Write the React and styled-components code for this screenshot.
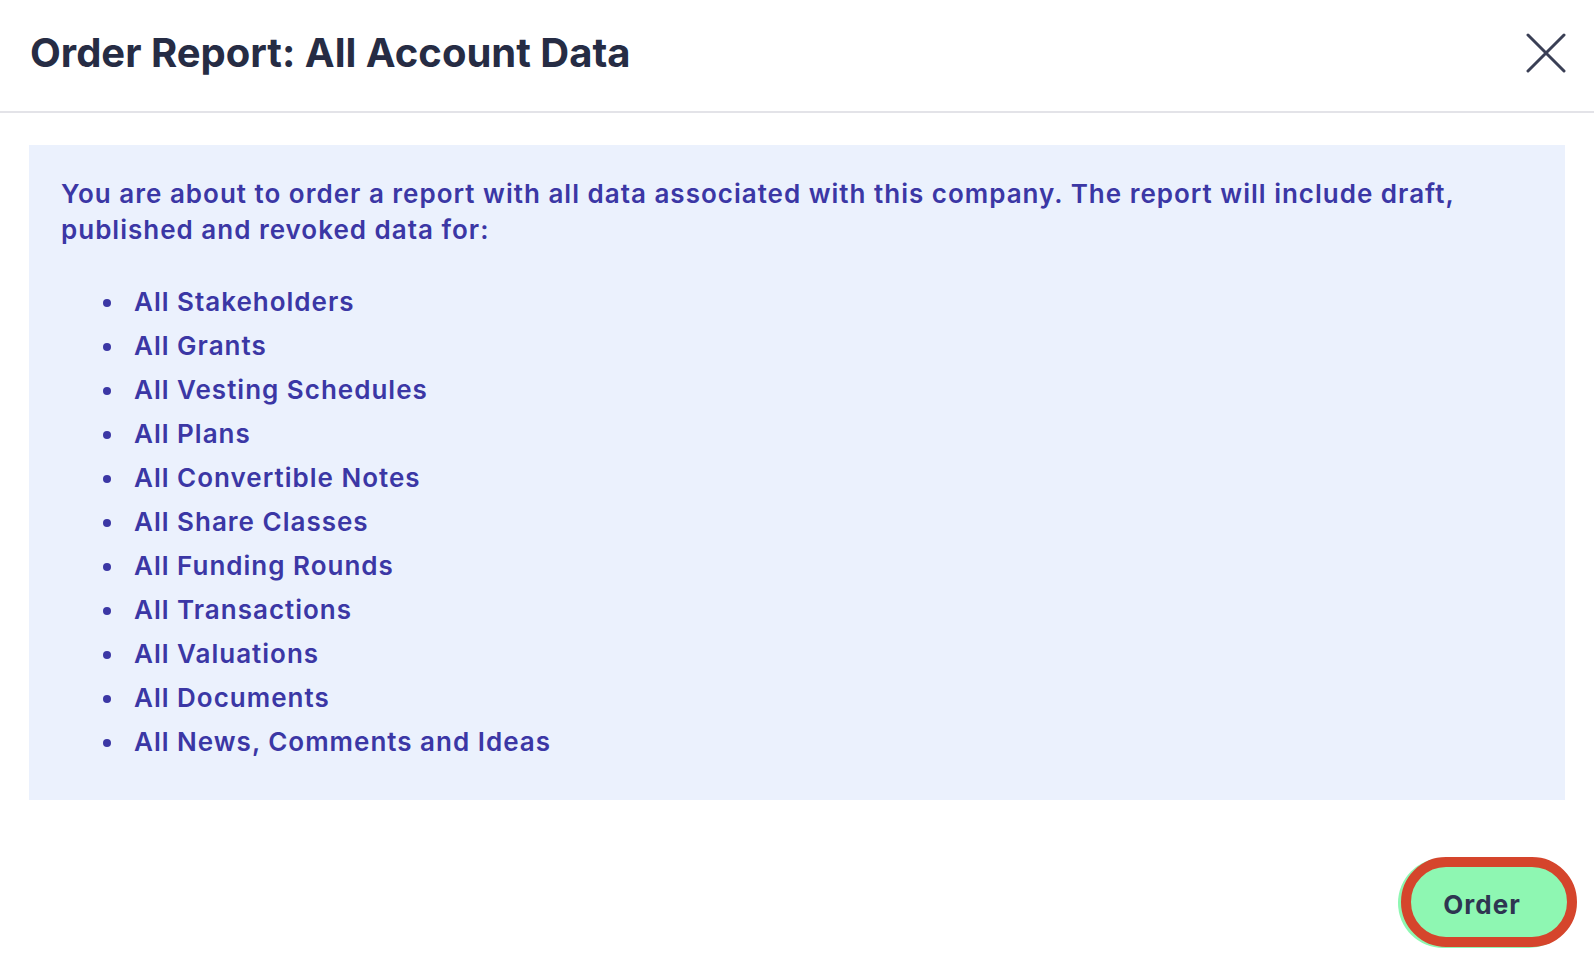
import styled, { createGlobalStyle } from "styled-components";

const GlobalStyle = createGlobalStyle`
    html, body {
        margin: 0;
        padding: 0;
        background: #ffffff;
        font-family: "Inter", "Noto Sans", sans-serif;
    }
`;

const items = [
    "All Stakeholders",
    "All Grants",
    "All Vesting Schedules",
    "All Plans",
    "All Convertible Notes",
    "All Share Classes",
    "All Funding Rounds",
    "All Transactions",
    "All Valuations",
    "All Documents",
    "All News, Comments and Ideas",
];

const CloseIcon = () => (
    <svg width="40" height="40" viewBox="0 0 40 40" fill="none">
        <path d="M2 2L38 38M38 2L2 38" stroke="#3a3f55" strokeWidth="3" strokeLinecap="round" />
    </svg>
);

const App = () => {
    return (
        <Modal>
            <GlobalStyle />
            <Header>
                <Title>Order Report: All Account Data</Title>
                <CloseButton aria-label="Close">
                    <CloseIcon />
                </CloseButton>
            </Header>
            <Body>
                <InfoBox>
                    <Intro>
                        You are about to order a report with all data associated with this company. The report will include draft,
                        published and revoked data for:
                    </Intro>
                    <List>
                        {items.map((item) => (
                            <Item key={item}>{item}</Item>
                        ))}
                    </List>
                </InfoBox>
            </Body>
            <Footer>
                <OrderButton>Order</OrderButton>
            </Footer>
        </Modal>
    );
};

const Modal = styled.div`
    display: flex;
    flex-direction: column;
    width: 100%;
    min-height: 968px;
    background: #ffffff;
`;

const Header = styled.div`
    display: flex;
    align-items: center;
    justify-content: space-between;
    height: 113px;
    padding: 0 28px 6px 30px;
    box-sizing: border-box;
    border-bottom: 2px solid #e3e3e8;
`;

const Title = styled.h1`
    margin: 0;
    font-size: 40px;
    font-weight: 700;
    color: #262c44;
    letter-spacing: 0;
`;

const CloseButton = styled.button`
    display: flex;
    align-items: center;
    justify-content: center;
    padding: 0;
    border: none;
    background: none;
    cursor: pointer;
`;

const Body = styled.div`
    padding: 32px 29px 0 29px;
`;

const InfoBox = styled.div`
    background: #ebf1fd;
    padding: 31px 32px 36px 32px;
    color: #3b37a5;
`;

const Intro = styled.p`
    margin: 0;
    font-size: 26px;
    font-weight: 600;
    line-height: 36px;
    letter-spacing: 1px;
`;

const List = styled.ul`
    margin: 32px 0 0 0;
    padding: 0;
    list-style: none;
`;

const Item = styled.li`
    display: flex;
    align-items: center;
    font-size: 26px;
    font-weight: 600;
    line-height: 44px;
    letter-spacing: 1px;

    &::before {
        content: "";
        flex: none;
        width: 8px;
        height: 8px;
        margin: 2px 23px 0 42px;
        border-radius: 50%;
        background: currentColor;
    }
`;

const Footer = styled.div`
    display: flex;
    justify-content: flex-end;
    padding: 57px 17px 0 0;
`;

const OrderButton = styled.button`
    width: 176px;
    height: 90px;
    padding: 4px 14px 0 0;
    border: 10px solid #d5452c;
    border-radius: 45px;
    background: #8ef7b2;
    box-shadow: -3px 1px 0 0 #8ef7b2;
    color: #2e3551;
    font-family: "Inter", "Noto Sans", sans-serif;
    font-size: 26px;
    font-weight: 700;
    letter-spacing: 1px;
    cursor: pointer;
`;

export default App;
